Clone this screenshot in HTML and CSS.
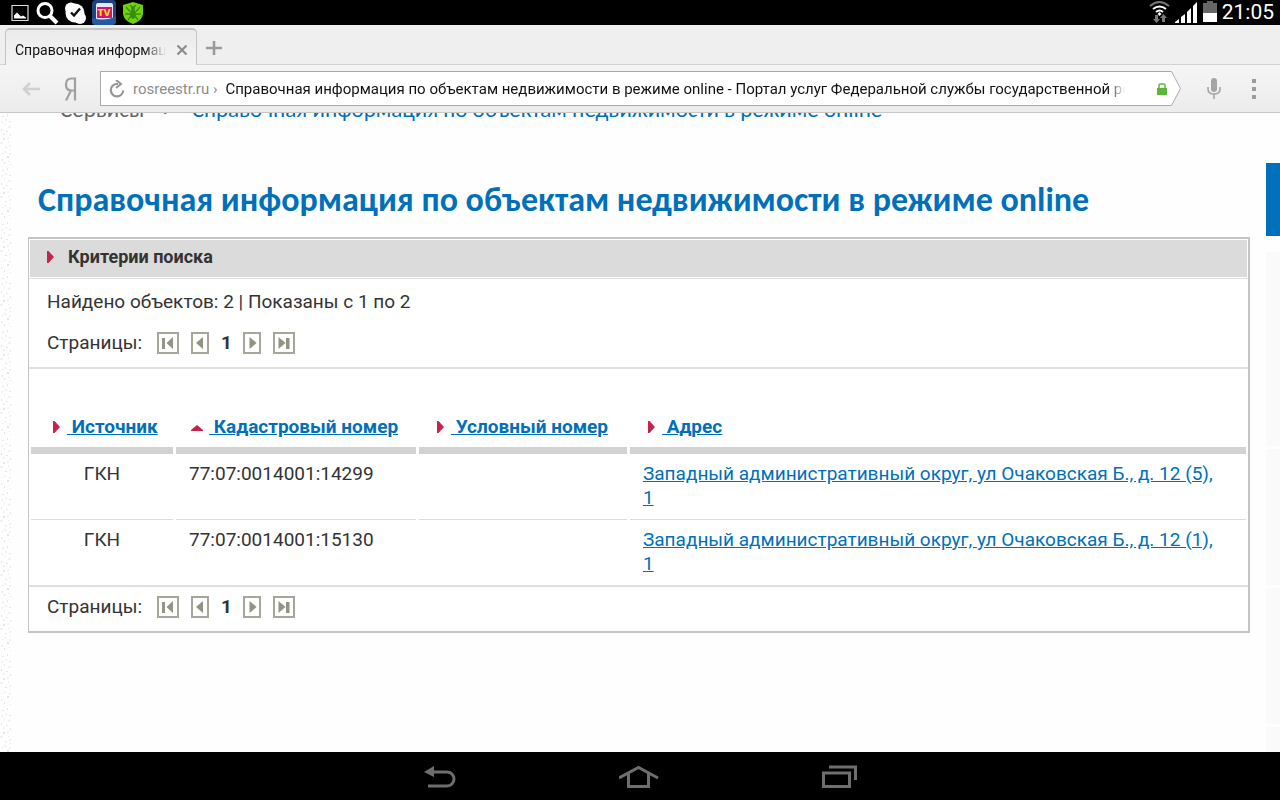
FILE: index.html
```html
<!DOCTYPE html>
<html lang="ru">
<head>
<meta charset="utf-8">
<meta name="viewport" content="width=device-width, initial-scale=1">
<title>Справочная информация по объектам недвижимости в режиме online</title>
<link rel="stylesheet" href="styles.css">
</head>
<body>
<svg class="defs" aria-hidden="true">
  <defs>
    <symbol id="first" viewBox="0 0 22 22"><path d="M1 1h20v20H1z" fill="#fff" stroke="#a5a899" stroke-width="2"/><path d="M5 6h3v11H5zM16 5v12L9.500 11z" fill="#929482"/></symbol>
    <symbol id="prev" viewBox="0 0 18 22"><path d="M1 1h16v20H1z" fill="#fff" stroke="#a5a899" stroke-width="2"/><path d="M12 5v12L5 11z" fill="#929482"/></symbol>
    <symbol id="next" viewBox="0 0 18 22"><path d="M1 1h16v20H1z" fill="#fff" stroke="#a5a899" stroke-width="2"/><path d="M6.500 5v12l7-6z" fill="#929482"/></symbol>
    <symbol id="last" viewBox="0 0 22 22"><path d="M1 1h20v20H1z" fill="#fff" stroke="#a5a899" stroke-width="2"/><path d="M13 6h3.500v11H13zM5.500 5v12l7-6z" fill="#929482"/></symbol>
    <symbol id="mark" viewBox="0 0 8 12"><path d="M0 0h1.500L7 6l-5.500 6H0z" fill="#c4244c"/></symbol>
  </defs>
</svg>

<div class="status">
  <div class="notices">
    <svg width="22" height="25" viewBox="0 0 22 25"><path d="M3 5.500h16v15H3z" fill="none" stroke="#ddd" stroke-width="1.200"/><path d="M5 18.500v-3l3-3 4 4 2-1 3 2v1z" fill="#fff"/></svg>
    <svg width="24" height="25" viewBox="0 0 24 25"><circle cx="10" cy="10.500" r="7" fill="none" stroke="#fff" stroke-width="3"/><path d="M15 16l7 7" stroke="#fff" stroke-width="4"/></svg>
    <svg width="24" height="25" viewBox="0 0 24 25"><circle cx="12" cy="13" r="9.500" fill="#fff"/><circle cx="8" cy="8.500" r="6" fill="#fff"/><circle cx="17" cy="18" r="6" fill="#fff"/><path d="M8 12.500l3 3 6-7" fill="none" stroke="#111" stroke-width="2.400"/></svg>
    <svg width="26" height="25" viewBox="0 0 26 25"><rect x="1" y="0" width="24" height="25" rx="4" fill="#1c4382"/><rect x="5" y="3" width="17" height="17" rx="2" fill="#e8e8ee"/><path d="M6 7h15v11H6z" fill="#d5127c"/><path d="M1 18q14 4 24-2v5q0 4-4 4H5q-4 0-4-4z" fill="#255aa3"/><text x="13" y="16" class="tv">TV</text></svg>
    <svg width="24" height="25" viewBox="0 0 24 25"><path d="M12 2l10 3v9q-1 7-10 10Q3 21 2 14V5z" fill="#6ed20c"/><g fill="#3d8c12"><ellipse cx="12" cy="14" rx="3" ry="5"/><circle cx="12" cy="8" r="2"/></g><path d="M5 7l4 4.500M19 7l-4 4.500M4 14h5M20 14h-5M7 20l3-4M17 20l-3-4M9 5l2 2M15 5l-2 2" stroke="#3d8c12" stroke-width="1.300"/></svg>
  </div>
  <div class="signals">
    <svg width="22" height="25" viewBox="0 0 22 25"><g fill="none" stroke-width="2"><path d="M1 6q9.500-8 19 0" stroke="#777"/><path d="M4 9q6.500-5 13 0M7 12q3.500-3 7 0" stroke="#fff"/></g><path d="M10.500 12l2 2-2 2-2-2z" fill="#fff"/><path d="M6 15h3v4h2l-3.500 4L4 19h2zM13 22v-4h-2l3.500-4 3.500 4h-2v4z" fill="#777"/></svg>
    <svg width="24" height="25" viewBox="0 0 24 25"><path d="M0 23v-1l4-3v4zM6 17l4-3v9H6zM12 12l4-4v15h-4zM18 6l4-4v21h-4z" fill="#fff"/></svg>
    <svg width="14" height="25" viewBox="0 0 14 25"><path d="M4 1h6v2h4v10H0V3h4z" fill="#666"/><path d="M0 13h14v9H0z" fill="#fff"/></svg>
    <time>21:05</time>
  </div>
</div>

<div class="tabs">
  <div class="tab">
    <span class="tab-name">Справочная информация</span>
    <button type="button" aria-label="Закрыть вкладку"><svg width="12" height="12" viewBox="0 0 12 12"><path d="M1.500 1.500l9 9M10.500 1.500l-9 9" stroke="#8c8c8c" stroke-width="2.200"/></svg></button>
  </div>
  <button type="button" class="add" aria-label="Новая вкладка"><svg width="16" height="16" viewBox="0 0 16 16"><path d="M8 1v14M0 8h16" stroke="#9b9b9b" stroke-width="2.600"/></svg></button>
</div>

<form class="toolbar">
  <button type="button" class="back" aria-label="Назад"><svg width="18" height="14" viewBox="0 0 18 14"><path d="M8 1L2 7l6 6M2 7h16" fill="none" stroke="#d0d0d0" stroke-width="2.600"/></svg></button>
  <button type="button" class="yandex" aria-label="Яндекс"><svg width="13" height="24" viewBox="0 0 13 24"><path d="M11 23.500V1.500H7.500Q2 1.500 2 7.500t5.500 6H11M7 13.500L2 23.500" fill="none" stroke="#a0a0a0" stroke-width="2.200"/></svg></button>
  <div class="address">
    <div class="field">
      <button type="button" aria-label="Обновить"><svg width="16" height="18" viewBox="0 0 16 18"><path d="M9 4H8a6.200 6.200 0 1 0 6.200 6.500" fill="none" stroke="#969696" stroke-width="2.200"/><path d="M7 0l5 4-5 4" fill="none" stroke="#969696" stroke-width="2"/></svg></button>
      <label for="url">rosreestr.ru ›</label>
      <input id="url" type="text" value="Справочная информация по объектам недвижимости в режиме online - Портал услуг Федеральной службы государственной регистрации">
      <svg width="10" height="12" viewBox="0 0 10 12"><path d="M2 5V2.500Q2 1 3.500 1h3Q8 1 8 2.500V5" fill="none" stroke="#5cb53c" stroke-width="1.500"/><path d="M0 5h10v7H0z" fill="#5cb53c"/></svg>
    </div>
    <svg class="tip" width="10" height="35" viewBox="0 0 10 35"><path d="M0 .5h.500l9 17-9 17H0" fill="#fff" stroke="#aaa"/></svg>
  </div>
  <button type="button" class="mic" aria-label="Голосовой поиск"><svg width="14" height="22" viewBox="0 0 14 22"><rect x="4" y="0" width="6" height="14" rx="3" fill="#a5a5a5"/><path d="M1 9v2q0 5 6 5t6-5V9M7 16v5" fill="none" stroke="#a5a5a5" stroke-width="1.600"/></svg></button>
  <button type="button" class="menu" aria-label="Меню"><svg width="4" height="20" viewBox="0 0 4 20"><path d="M0 0h4v4H0zM0 8h4v4H0zM0 16h4v4H0z" fill="#9c9c9c"/></svg></button>
</form>

<div class="page">
  <svg class="texture" aria-hidden="true"><defs><pattern id="grain" width="12" height="54" patternUnits="userSpaceOnUse"><path d="M2 3h2v1H2zM7 1h1v2H7zM9 8h2v1H9zM4 11h1v1H4zM1 16h1v2H1zM6 18h2v1H6zM10 21h1v2h-1zM3 25h2v2H3zM8 29h1v1H8zM5 34h2v1H5zM10 36h1v1h-1zM2 40h1v1H2zM7 43h2v2H7zM4 49h1v2H4zM10 51h1v1h-1z" fill="#e6e6e6"/><path d="M5 6h2v2H5zM1 8h2v2H1zM8 13h3v2H8zM3 20h2v2H3zM7 24h2v2H7zM0 29h3v2H0zM9 32h2v2H9zM4 38h2v2H4zM9 40h2v2H9zM1 46h2v2H1zM8 48h2v1H8z" fill="#f2f2f2"/></pattern></defs><rect width="12" height="100%" fill="url(#grain)"/></svg>
  <main>
    <nav class="crumbs"><span>Сервисы</span><span>&gt;</span><a href="#">Справочная информация по объектам недвижимости в режиме online</a></nav>
    <h1>Справочная информация по объектам недвижимости в режиме online</h1>
    <section class="panel">
      <h2><svg width="8" height="12"><use href="#mark"/></svg>Критерии поиска</h2>
      <div class="summary">
        <p>Найдено объектов: 2 | Показаны с 1 по 2</p>
        <div class="pager"><span>Страницы:</span>
          <a href="#" aria-label="Первая"><svg width="22" height="22"><use href="#first"/></svg></a><a href="#" aria-label="Предыдущая"><svg width="18" height="22"><use href="#prev"/></svg></a><b>1</b><a href="#" aria-label="Следующая"><svg width="18" height="22"><use href="#next"/></svg></a><a href="#" aria-label="Последняя"><svg width="22" height="22"><use href="#last"/></svg></a></div>
      </div>
      <table>
        <colgroup><col class="c-source"><col class="c-cadastral"><col class="c-cond"><col></colgroup>
        <thead>
          <tr>
            <th><svg width="8" height="12"><use href="#mark"/></svg><a href="#">&nbsp;Источник</a></th>
            <th><svg width="12" height="12" viewBox="0 0 12 12"><path d="M0 10V9l6-5 6 5v1z" fill="#c4244c"/></svg><a href="#">&nbsp;Кадастровый номер</a></th>
            <th><svg width="8" height="12"><use href="#mark"/></svg><a href="#">&nbsp;Условный номер</a></th>
            <th><svg width="8" height="12"><use href="#mark"/></svg><a href="#">&nbsp;Адрес</a></th>
          </tr>
        </thead>
        <tbody>
          <tr><td class="mid">ГКН</td><td>77:07:0014001:14299</td><td></td><td><a href="#">Западный административный округ, ул Очаковская Б., д. 12 (5), 1</a></td></tr>
          <tr><td class="mid">ГКН</td><td>77:07:0014001:15130</td><td></td><td><a href="#">Западный административный округ, ул Очаковская Б., д. 12 (1), 1</a></td></tr>
        </tbody>
      </table>
      <div class="pager bottom"><span>Страницы:</span>
        <a href="#" aria-label="Первая"><svg width="22" height="22"><use href="#first"/></svg></a><a href="#" aria-label="Предыдущая"><svg width="18" height="22"><use href="#prev"/></svg></a><b>1</b><a href="#" aria-label="Следующая"><svg width="18" height="22"><use href="#next"/></svg></a><a href="#" aria-label="Последняя"><svg width="22" height="22"><use href="#last"/></svg></a></div>
    </section>
  </main>
  <aside><div class="accent"></div><div class="tall"></div><div></div><div></div><div></div></aside>
</div>

<nav class="system">
  <button type="button" aria-label="Назад"><svg width="32" height="22" viewBox="0 0 32 22"><path d="M8 6h15a7 7 0 0 1 0 14H4" fill="none" stroke="#6e6e6e" stroke-width="3"/><path d="M0 6l10-6v11z" fill="#6e6e6e"/></svg></button>
  <button type="button" aria-label="Домой"><svg width="40" height="24" viewBox="0 0 40 24"><path d="M0 13L19.500 2.500 39 13M9.500 9v12.500h20V9" fill="none" stroke="#6e6e6e" stroke-width="3"/></svg></button>
  <button type="button" aria-label="Недавние"><svg width="35" height="24" viewBox="0 0 35 24"><path d="M1.500 8h26v13.500h-26zM7 2h26.500v13" fill="none" stroke="#6e6e6e" stroke-width="3"/></svg></button>
</nav>
</body>
</html>
```
FILE: styles.css
```css
* { box-sizing: border-box; }

body {
  margin: 0;
  height: 100vh;
  display: flex;
  flex-direction: column;
  overflow: hidden;
  background: #fefefe;
  color: #333;
  font-family: Roboto, "Liberation Sans", sans-serif;
  font-size: 19px;
  line-height: 24px;
}

button { padding: 0; border: 0; background: none; display: flex; }
svg { display: block; flex: none; }
.defs { position: absolute; width: 0; height: 0; }

.status {
  flex: none;
  height: 25px;
  display: flex;
  justify-content: space-between;
  background: #000;
  color: #fff;
}
.notices { display: flex; gap: 4px; padding-left: 9px; }
.signals { display: flex; gap: 4px; padding-right: 6px; }
.signals time { font-size: 21px; padding-left: 1px; }
.tv { font: bold 9px "DejaVu Sans", sans-serif; fill: #ffe000; text-anchor: middle; }

.tabs {
  flex: none;
  height: 40px;
  display: flex;
  align-items: flex-end;
  gap: 9px;
  padding-left: 5px;
  background: #efefef;
  box-shadow: inset 0 -1px #d2d2d2;
}
.tab {
  width: 192px;
  height: 37px;
  display: flex;
  align-items: center;
  gap: 10px;
  padding: 4px 8px 0 9px;
  border: 2px solid #c4c4c4;
  border-width: 2px 1px 0;
  border-radius: 5px 5px 0 0;
  background: linear-gradient(#ebebeb, #f4f4f4);
}
.tab-name {
  flex: 1;
  overflow: hidden;
  white-space: nowrap;
  font-size: 14px;
  color: #111;
  mask-image: linear-gradient(to right, #000 85%, transparent);
}
.add { padding-bottom: 9px; }

.toolbar {
  flex: none;
  height: 48px;
  display: flex;
  align-items: center;
  margin: 0;
  padding: 0 24px 0 22px;
  background: linear-gradient(#f5f5f5, #ececec);
  border-bottom: 1px solid #c8c8c8;
}
.yandex { margin: 0 23px 0 24px; }
.address { flex: 1; min-width: 0; display: flex; }
.field {
  flex: 1;
  min-width: 0;
  height: 35px;
  display: flex;
  align-items: center;
  padding: 0 4px 0 8px;
  border: 1px solid #aaa;
  border-right: 0;
  background: #fff;
  font-size: 15px;
}
.field label { padding: 0 8px; color: #8c8c8c; }
.field input {
  flex: 1;
  min-width: 0;
  padding: 0;
  margin-right: 32px;
  border: 0;
  outline: 0;
  background: none;
  color: #111;
  font: inherit;
  mask-image: linear-gradient(to right, #000 98%, transparent);
}
.mic { margin: 0 31px 0 26px; }

.page { flex: 1; min-height: 0; display: flex; overflow: hidden; }
.texture { width: 28px; height: 100%; }
main { flex: 1; min-width: 0; }
.crumbs {
  display: flex;
  gap: 18px;
  margin-top: -17px;
  padding-left: 32px;
  font: 23px/26px Carlito, "Open Sans", sans-serif;
  color: #666;
}
a { color: #0070ba; }
.crumbs a { text-decoration: none; }
h1 {
  margin: 56px 0 15px;
  padding-left: 10px;
  font: bold 34px/44px Carlito, "Open Sans", sans-serif;
  color: #0070ba;
  white-space: nowrap;
}

.panel { border: 2px solid #c4c4c4; border-left-width: 1px; background: #fff; }
h2 {
  display: flex;
  align-items: center;
  gap: 13px;
  height: 37px;
  margin: 1px 1px 0;
  padding: 0 0 4px 17px;
  font-size: 18px;
  background: #dbdbdb;
}
.summary {
  display: grid;
  gap: 17px;
  margin-top: 1px;
  padding: 11px 18px 12px;
  border-top: 1px solid #ddd;
  border-bottom: 2px solid #e0e0e0;
}
.summary p { margin: 0; }
.pager { display: flex; align-items: center; gap: 12px; }
.pager span { margin-right: 3px; }
.pager b { width: 10px; }
.bottom { padding: 8px 18px 12px; border-top: 2px solid #e0e0e0; }

table {
  width: calc(100% + 2px);
  table-layout: fixed;
  border-spacing: 3px 0;
  margin: 37px -1px 0;
}
.c-source { width: 142px; }
.c-cadastral { width: 240px; }
.c-cond { width: 208px; }
th {
  height: 48px;
  padding: 0 0 0 18px;
  border-bottom: 7px solid #d2d2d2;
  text-align: left;
  white-space: nowrap;
}
th:first-child { padding-left: 22px; }
th:nth-child(2) { padding-left: 15px; }
th svg { display: inline-block; margin-right: 6px; }
td { height: 66px; padding: 8px 20px 9px 13px; vertical-align: top; border-bottom: 1px solid #ddd; }
tbody tr:last-child td { height: 65px; padding-bottom: 8px; border-bottom: 0; }
td.mid { padding-right: 13px; text-align: center; }

aside { width: 14px; margin: 50px 0 0 16px; display: flex; flex-direction: column; gap: 3px; }
aside div { flex: none; height: 136px; background: #fafafa; }
aside .accent { height: 73px; margin-bottom: 13px; background: #0070ba; }
aside .tall { height: 194px; }

.system {
  flex: none;
  height: 48px;
  display: flex;
  align-items: center;
  justify-content: center;
  gap: 163px;
  padding-top: 1px;
  background: #000;
}
```
